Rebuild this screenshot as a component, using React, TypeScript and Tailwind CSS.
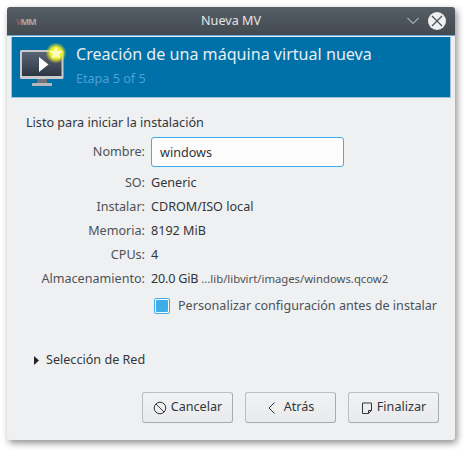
import React from 'react';

const rows = [
  { label: 'SO:', value: 'Generic' },
  { label: 'Instalar:', value: 'CDROM/ISO local' },
  { label: 'Memoria:', value: '8192 MiB' },
  { label: 'CPUs:', value: '4' },
];

const MonitorIcon = () => (
  <svg width="46" height="44" viewBox="0 0 46 44" className="shrink-0 overflow-visible">
    <defs>
      <linearGradient id="scr" x1="0" y1="0" x2="0" y2="1">
        <stop offset="0" stopColor="#5a6474" />
        <stop offset="1" stopColor="#2e3644" />
      </linearGradient>
      <radialGradient id="glow">
        <stop offset="0.55" stopColor="#eef02a" />
        <stop offset="1" stopColor="#e8e820" stopOpacity="0" />
      </radialGradient>
    </defs>
    <rect x="0" y="5" width="43.5" height="29" rx="1.5" fill="#c9cacb" />
    <rect x="2" y="7" width="39.5" height="24" fill="url(#scr)" />
    <rect x="17" y="34" width="10" height="4" fill="#6f7377" />
    <rect x="12" y="38" width="20" height="3" rx="0.5" fill="#b5b7b9" />
    <path d="M19 12 L28.5 19.5 L19 27 Z" fill="#fcfcfc" />
    <circle cx="36" cy="8" r="10.5" fill="url(#glow)" />
    <path d="M36 1.5 L38 5.8 L42.5 6.3 L39.2 9.3 L40.1 13.8 L36 11.5 L31.9 13.8 L32.8 9.3 L29.5 6.3 L34 5.8 Z" fill="#fdfbc4" />
  </svg>
);

const Btn = ({ icon, label, gap }: { icon: React.ReactNode; label: string; gap: string }) => (
  <button className={`w-[91px] h-[31px] flex items-center justify-center ${gap} rounded-[3px] border border-[#bcbebf] border-r-[#a9abac] border-b-[#a9abac] bg-gradient-to-b from-[#f1f2f3] to-[#e9eaec] text-[12.6px] text-[#31363b]`}>
    {icon}
    <span>{label}</span>
  </button>
);

export default function App() {
  return (
    <div className="w-[468px] h-[453px] bg-white pt-[7px] pl-[7px] font-['Noto_Sans',sans-serif]">
      <div className="w-[448px] h-[433px] flex flex-col rounded-[3px] bg-[#eff0f1] shadow-[2px_3px_7px_rgba(0,0,0,0.45)]">
        {/* title bar */}
        <div className="h-[29px] shrink-0 flex items-center relative rounded-t-[3px] bg-gradient-to-b from-[#565e66] to-[#434a50] border-b border-[#66a9d6]">
          <span className="ml-[9px] w-[24px] text-[9px] leading-none font-bold tracking-[-1px] text-[#a9a8a6]">
            <span className="text-[#96606c]">V</span>MM
          </span>
          <span className="absolute left-0 right-0 text-center text-[12.6px] text-[#e3e5e7]">Nueva MV</span>
          <svg width="14" height="14" viewBox="0 0 14 14" className="absolute left-[399px] top-[7px]" fill="none" stroke="#e3e5e7" strokeWidth="1">
            <path d="M1.5 4 L7 9.5 L12.5 4" />
          </svg>
          <div className="absolute left-[421px] top-[5px] w-[18px] h-[18px] rounded-full bg-[#eff0f1] flex items-center justify-center">
            <svg width="12" height="12" viewBox="0 0 12 12" fill="none" stroke="#4a5157" strokeWidth="1.3">
              <path d="M1 1 L11 11 M11 1 L1 11" />
            </svg>
          </div>
        </div>

        {/* banner */}
        <div className="mx-[4px] mt-[1px] h-[61px] shrink-0 flex items-center pl-[8px] bg-[#0071a8] border border-[#9fc3d8] border-t-0">
          <MonitorIcon />
          <div className="ml-[10px] flex flex-col">
            <span className="text-[16.1px] leading-[22px] text-[#e6eef3] mt-[-4px]">Creación de una máquina virtual nueva</span>
            <span className="text-[12.6px] leading-[18px] mt-[5px] text-[#4ca0d6]">Etapa 5 of 5</span>
          </div>
        </div>

        {/* body */}
        <div className="flex-1 flex flex-col pl-[19px] pr-[16px] text-[12.6px] text-[#31363b]">
          <div className="mt-[16px] leading-[18px]">Listo para iniciar la instalación</div>
          <div className="mt-[5px] grid grid-cols-[119px_1fr] gap-x-[6px] items-center">
            <span className="text-right text-[#4d5257]">Nombre:</span>
            <input
              readOnly
              value="windows"
              className="w-[193px] h-[30px] px-[8px] rounded-[3px] border border-[#3daee9] bg-[#fcfcfc] text-[12.6px] text-[#31363b] outline-none"
            />
          </div>
          <div className="mt-[4px] grid grid-cols-[119px_1fr] gap-x-[6px] auto-rows-[24px] items-center">
            {rows.map((r) => (
              <React.Fragment key={r.label}>
                <span className="text-right text-[#4d5257]">{r.label}</span>
                <span>{r.value}</span>
              </React.Fragment>
            ))}
            <span className="text-right text-[#4d5257]">Almacenamiento:</span>
            <span className="flex items-baseline gap-[3px] whitespace-nowrap">
              <span className="tracking-[-0.2px]">20.0 GiB</span>
              <span className="text-[11.3px] text-[#4d5257]">...lib/libvirt/images/windows.qcow2</span>
            </span>
          </div>
          <div className="mt-[6px] ml-[128px] flex items-center gap-[8px]">
            <span className="w-[16px] h-[16px] rounded-[2px] border border-[#3daee9] bg-[#fcfcfc] flex items-center justify-center shrink-0">
              <span className="w-[12px] h-[12px] bg-[#3daee9] rounded-[1px]" />
            </span>
            <span className="leading-[18px] whitespace-nowrap text-[#4d5257]">Personalizar configuración antes de instalar</span>
          </div>
          <div className="mt-[36px] ml-[8px] flex items-center gap-[7px]">
            <svg width="5" height="9" viewBox="0 0 5 9" className="shrink-0">
              <path d="M0 0 L5 4.5 L0 9 Z" fill="#232629" />
            </svg>
            <span className="leading-[18px]">Selección de Red</span>
          </div>
          <div className="mt-[23px] flex justify-end gap-[12px]">
            <Btn
              gap="gap-[4px]"
              label="Cancelar"
              icon={
                <svg width="14" height="14" viewBox="0 0 14 14" fill="none" stroke="#31363b" strokeWidth="1">
                  <circle cx="7" cy="7" r="5.8" />
                  <path d="M3 3 L11 11" />
                </svg>
              }
            />
            <Btn
              gap="gap-[7px]"
              label="Atrás"
              icon={
                <svg width="10" height="14" viewBox="0 0 10 14" fill="none" stroke="#31363b" strokeWidth="1">
                  <path d="M7.5 1.5 L2 7 L7.5 12.5" />
                </svg>
              }
            />
            <Btn
              gap="gap-[4px]"
              label="Finalizar"
              icon={
                <svg width="12" height="14" viewBox="0 0 12 14" fill="none" stroke="#31363b" strokeWidth="1">
                  <path d="M1.5 2 H10.5 V9.5 L7.5 12.5 H1.5 Z M7.5 12.5 V9.5 H10.5" />
                </svg>
              }
            />
          </div>
        </div>
      </div>
    </div>
  );
}
